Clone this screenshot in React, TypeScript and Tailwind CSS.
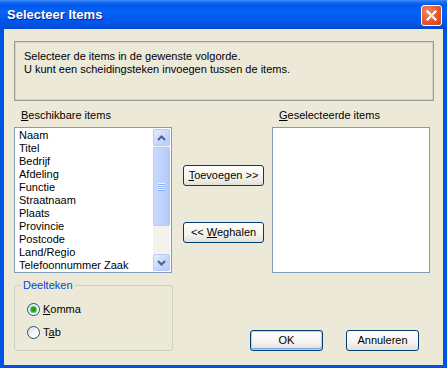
const items = [
  'Naam',
  'Titel',
  'Bedrijf',
  'Afdeling',
  'Functie',
  'Straatnaam',
  'Plaats',
  'Provincie',
  'Postcode',
  'Land/Regio',
  'Telefoonnummer Zaak',
];

function Chevron({ up }: { up?: boolean }) {
  return (
    <svg width="9" height="6" viewBox="0 0 9 6">
      <path
        d={up ? 'M1 5 L4.5 1.5 L8 5' : 'M1 1 L4.5 4.5 L8 1'}
        fill="none"
        stroke="#4d6185"
        strokeWidth="2"
      />
    </svg>
  );
}

function ScrollButton({ up }: { up?: boolean }) {
  return (
    <div className="flex h-[17px] w-[17px] items-center justify-center rounded-[2px] border border-[#b7cbf5] bg-[linear-gradient(135deg,#e6eefe,#c6d7fc_55%,#b6cbf8)]">
      <Chevron up={up} />
    </div>
  );
}

function Scrollbar() {
  return (
    <div className="flex h-full w-[17px] flex-col bg-[#f4f2ea]">
      <ScrollButton up />
      <div className="mt-[1px] flex h-[79px] items-center justify-center rounded-[2px] border border-[#b7cbf5] bg-[linear-gradient(90deg,#c9d9fd,#bed1fb_60%,#b3c8f8)]">
        <div className="flex flex-col gap-[1px]">
          <div className="h-[1px] w-[7px] bg-[#eef4fe] shadow-[0_1px_0_#8cb0f8]" />
          <div className="h-[1px] w-[7px] bg-[#eef4fe] shadow-[0_1px_0_#8cb0f8]" />
          <div className="h-[1px] w-[7px] bg-[#eef4fe] shadow-[0_1px_0_#8cb0f8]" />
          <div className="h-[1px] w-[7px] bg-[#eef4fe] shadow-[0_1px_0_#8cb0f8]" />
        </div>
      </div>
      <div className="flex-1" />
      <ScrollButton />
    </div>
  );
}

function XpButton({ children, isDefault }: { children: React.ReactNode; isDefault?: boolean }) {
  return (
    <div
      className={
        'flex h-[21px] w-full items-center justify-center rounded-[3px] border border-[#003c74] bg-[linear-gradient(to_bottom,#ffffff,#f4f3ee_60%,#e3e0d4)] leading-[13px] ' +
        (isDefault ? 'shadow-[inset_0_0_0_1px_#bcd1f7,inset_-1px_-2px_0_0_#7aa0e8]' : '')
      }
    >
      {children}
    </div>
  );
}

function Radio({ checked, children }: { checked?: boolean; children: React.ReactNode }) {
  return (
    <div className="flex h-[23px] items-center">
      <div className="flex h-[13px] w-[13px] items-center justify-center rounded-full border border-[#1c5180] bg-[linear-gradient(135deg,#dcdcd5,#ffffff_70%)]">
        {checked && <div className="h-[5px] w-[5px] rounded-full bg-[#21a121] shadow-[0_0_0_1px_#5ec45e]" />}
      </div>
      <span className="ml-[3px] leading-[13px]">{children}</span>
    </div>
  );
}

export default function App() {
  return (
    <div className="flex h-[368px] w-[447px] flex-col bg-[#0054e3] font-['Liberation_Sans',Arial,sans-serif] text-[11px] text-black">
      {/* title bar */}
      <div className="flex h-[29px] items-start justify-between bg-[linear-gradient(to_bottom,#3d8cf5_0px,#1b6ff3_2px,#0058ee_5px,#0463f4_12px,#0058ee_20px,#0051e0_26px,#0046cf_29px)] pr-[5px] pt-[5px]">
        <span className="pl-[7px] pt-[2px] text-[13px] font-bold leading-[16px] text-white [text-shadow:1px_1px_0_#0a1f8f]">
          Selecteer Items
        </span>
        <div className="flex h-[21px] w-[21px] items-center justify-center rounded-[3px] border border-white bg-[radial-gradient(circle_at_30%_30%,#f08a64,#e0562e_60%,#c8461f)]">
          <svg width="11" height="11" viewBox="0 0 11 11">
            <path d="M1.5 1.5 L9.5 9.5 M9.5 1.5 L1.5 9.5" stroke="white" strokeWidth="2.2" strokeLinecap="square" />
          </svg>
        </div>
      </div>

      {/* body */}
      <div className="mx-[4px] mb-[3px] flex flex-1 flex-col bg-[#ece9d8] pl-[10px] pt-[12px]">
        <div className="h-[60px] w-[420px] border border-[#9d9b8c] pl-[9px] pt-[8px] leading-[13px] shadow-[inset_0_0_0_1px_#d6d3c4]">
          <p>Selecteer de items in de gewenste volgorde.</p>
          <p>U kunt een scheidingsteken invoegen tussen de items.</p>
        </div>

        <div className="mt-[8px] flex">
          <div className="w-[158px]">
            <div className="h-[18px] pl-[7px] leading-[13px]">
              <span className="underline">B</span>eschikbare items
            </div>
            <div className="flex h-[146px] border border-[#7f9db9] bg-white p-[1px]">
              <ul className="flex-1 pl-[3px] leading-[13px]">
                {items.map((it) => (
                  <li key={it} className="whitespace-nowrap">
                    {it}
                  </li>
                ))}
              </ul>
              <Scrollbar />
            </div>
          </div>

          <div className="ml-[11px] flex w-[81px] flex-col gap-[36px] pt-[56px]">
            <XpButton>
              <span>
                <span className="underline">T</span>oevoegen &gt;&gt;
              </span>
            </XpButton>
            <XpButton>
              <span>
                &lt;&lt; <span className="underline">W</span>eghalen
              </span>
            </XpButton>
          </div>

          <div className="ml-[8px] w-[158px]">
            <div className="h-[18px] pl-[7px] leading-[13px]">
              <span className="underline">G</span>eselecteerde items
            </div>
            <div className="h-[146px] border border-[#7f9db9] bg-white" />
          </div>
        </div>

        <div className="mt-[6px] flex items-end">
          <fieldset className="h-[72px] w-[159px] rounded-[3px] border border-[#d0d0bf]">
            <legend className="ml-[6px] px-[2px] leading-[13px] text-[#0046d5]">Deelteken</legend>
            <div className="flex flex-col pl-[12px] pt-[6px]">
              <Radio checked>
                <span className="underline">K</span>omma
              </Radio>
              <Radio>
                T<span className="underline">a</span>b
              </Radio>
            </div>
          </fieldset>

          <div className="ml-[77px] w-[73px]">
            <XpButton isDefault>OK</XpButton>
          </div>
          <div className="ml-[23px] w-[73px]">
            <XpButton>Annuleren</XpButton>
          </div>
        </div>
      </div>
    </div>
  );
}
